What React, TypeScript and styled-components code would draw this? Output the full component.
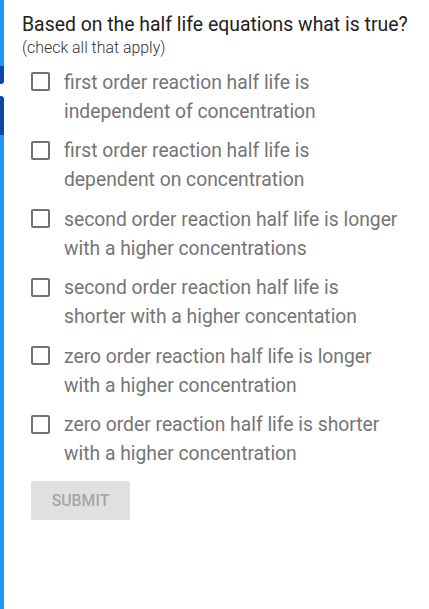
import styled, { createGlobalStyle } from 'styled-components';

const GlobalStyle = createGlobalStyle`
  html, body {
    margin: 0;
    padding: 0;
    background: #ffffff;
  }
  body {
    font-family: Roboto, "Liberation Sans", Arial, sans-serif;
  }
`;

const Page = styled.div`
  display: flex;
  min-height: 609px;
`;

const SideBar = styled.div`
  width: 4px;
  flex-shrink: 0;
  display: flex;
  flex-direction: column;
`;

const BarPiece = styled.div<{ $h?: number; $color: string; $round?: 'top' | 'bottom' }>`
  height: ${({ $h }) => ($h ? `${$h}px` : 'auto')};
  flex: ${({ $h }) => ($h ? '0 0 auto' : '1 1 auto')};
  background: ${({ $color }) => $color};
  border-radius: ${({ $round }) =>
    $round === 'top' ? '0 3px 0 0' : $round === 'bottom' ? '0 0 3px 0' : '0'};
`;

const Content = styled.div`
  flex: 1;
  padding: 13px 0 0 18px;
`;

const Title = styled.h1`
  margin: 0;
  font-size: 19.4px;
  font-weight: 400;
  line-height: 24px;
  color: #222222;
`;

const Hint = styled.p`
  margin: 1px 0 0;
  font-size: 15.9px;
  font-weight: 300;
  line-height: 20px;
  color: #333333;
`;

const Options = styled.div`
  display: flex;
  flex-direction: column;
  gap: 10.6px;
  margin-top: 9.5px;
  padding-left: 9px;
`;

const Option = styled.label`
  display: flex;
  align-items: flex-start;
  gap: 14px;
  cursor: pointer;
`;

const Box = styled.span`
  width: 15px;
  height: 15px;
  margin-top: 4.5px;
  flex-shrink: 0;
  border: 2px solid #727272;
  border-radius: 2px;
`;

const OptionText = styled.span`
  font-size: 19.3px;
  line-height: 29px;
  color: #757575;
  max-width: 338px;
`;

const SubmitButton = styled.button`
  margin: 12.5px 0 0 9px;
  width: 99px;
  height: 39px;
  border: none;
  border-radius: 2px;
  background: #e0e0e0;
  color: #a6a6a6;
  font-family: Roboto, "Liberation Sans", Arial, sans-serif;
  font-size: 15.8px;
  font-weight: 500;
  text-transform: uppercase;
  cursor: not-allowed;
`;

const options = [
  'first order reaction half life is independent of concentration',
  'first order reaction half life is dependent on concentration',
  'second order reaction half life is longer with a higher concentrations',
  'second order reaction half life is shorter with a higher concentation',
  'zero order reaction half life is longer with a higher concentration',
  'zero order reaction half life is shorter with a higher concentration',
];

const App = () => (
  <>
    <GlobalStyle />
    <Page>
      <SideBar>
        <BarPiece $h={66} $color="#2196f3" />
        <BarPiece $h={18} $color="#0d47a1" $round="bottom" />
        <BarPiece $h={12} $color="#ffffff" />
        <BarPiece $h={39} $color="#0d47a1" $round="top" />
        <BarPiece $color="#2196f3" />
      </SideBar>
      <Content>
        <Title>Based on the half life equations what is true?</Title>
        <Hint>(check all that apply)</Hint>
        <Options>
          {options.map((text) => (
            <Option key={text}>
              <Box />
              <OptionText>{text}</OptionText>
            </Option>
          ))}
        </Options>
        <SubmitButton type="button" disabled>
          Submit
        </SubmitButton>
      </Content>
    </Page>
  </>
);

export default App;
